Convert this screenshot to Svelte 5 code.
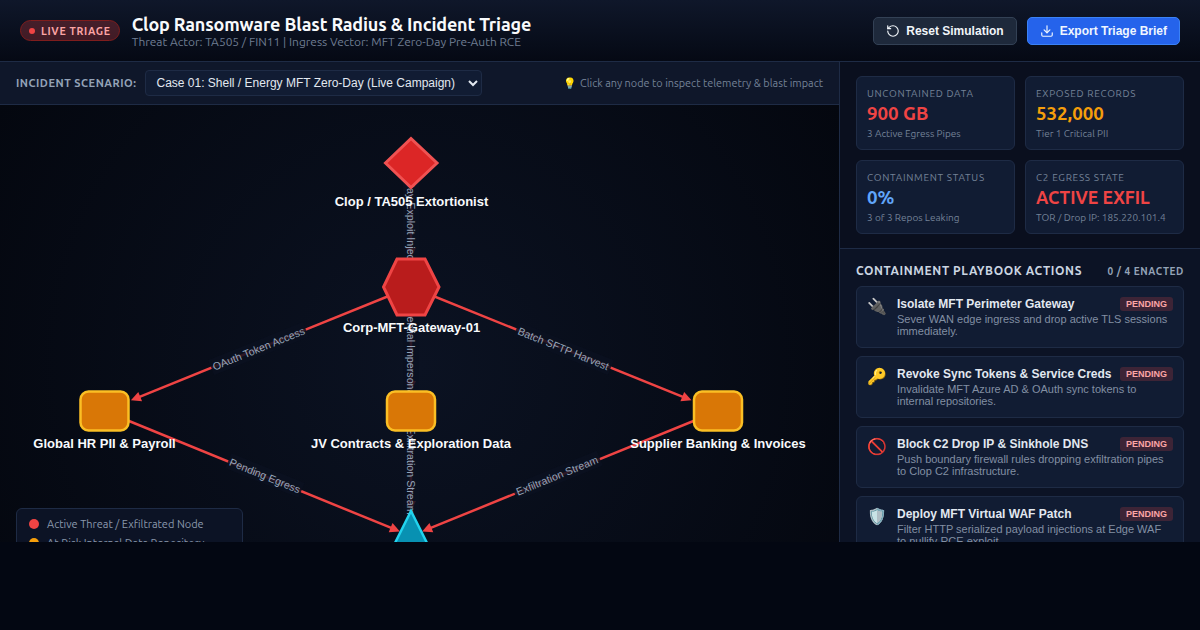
<!--
  Incident triage board: blast radius graph on the left, metrics and playbook on the right.
-->
<script>
  const metrics = [
    { label: 'UNCONTAINED DATA', value: '900 GB', tone: 'red', sub: '3 Active Egress Pipes' },
    { label: 'EXPOSED RECORDS', value: '532,000', tone: 'amber', sub: 'Tier 1 Critical PII' },
    { label: 'CONTAINMENT STATUS', value: '0%', tone: 'blue', sub: '3 of 3 Repos Leaking' },
    { label: 'C2 EGRESS STATE', value: 'ACTIVE EXFIL', tone: 'red small', sub: 'TOR / Drop IP: 185.220.101.4' }
  ];

  const actions = [
    { icon: '🔌', title: 'Isolate MFT Perimeter Gateway', desc: 'Sever WAN edge ingress and drop active TLS sessions immediately.' },
    { icon: '🔑', title: 'Revoke Sync Tokens & Service Creds', desc: 'Invalidate MFT Azure AD & OAuth sync tokens to internal repositories.' },
    { icon: '🚫', title: 'Block C2 Drop IP & Sinkhole DNS', desc: 'Push boundary firewall rules dropping exfiltration pipes to Clop C2 infrastructure.' },
    { icon: '🛡️', title: 'Deploy MFT Virtual WAF Patch', desc: 'Filter HTTP serialized payload injections at Edge WAF to nullify RCE exploit.' }
  ];

  const actor = { x: 411, y: 163 };
  const gateway = { x: 411, y: 287 };
  const hr = { x: 104.5, y: 411 };
  const jv = { x: 411, y: 411 };
  const supplier = { x: 718, y: 411 };
  const drop = { x: 411, y: 536 };

  // gap: how far the arrow tip stops short of the target centre
  // mid: label sits halfway along the visible part of the edge, not centre to centre
  // w: width of the plate behind the label
  const edges = [
    { from: actor, to: gateway, label: '0-Day Exploit Injection', gap: 29, mid: { x: 411, y: 224 }, w: 110 },
    { from: gateway, to: hr, label: 'OAuth Token Access', gap: 28.5, mid: { x: 258.5, y: 348.5 }, w: 102 },
    { from: gateway, to: jv, label: 'Credential Impersonation', gap: 20, mid: { x: 411, y: 353 }, w: 118 },
    { from: gateway, to: supplier, label: 'Batch SFTP Harvest', gap: 28.5, mid: { x: 563.5, y: 348.5 }, w: 102 },
    { from: hr, to: drop, label: 'Pending Egress', gap: 12, mid: { x: 265, y: 475.5 }, w: 79 },
    { from: jv, to: drop, label: 'Exfiltration Stream', gap: 25, mid: { x: 411, y: 471 }, w: 92 },
    { from: supplier, to: drop, label: 'Exfiltration Stream', gap: 12, mid: { x: 557, y: 475.5 }, w: 92 }
  ].map((e) => {
    const dx = e.to.x - e.from.x;
    const dy = e.to.y - e.from.y;
    const len = Math.hypot(dx, dy);
    const ux = dx / len;
    const uy = dy / len;
    const tip = { x: e.to.x - ux * e.gap, y: e.to.y - uy * e.gap };
    let angle = (Math.atan2(dy, dx) * 180) / Math.PI;
    if (angle > 90) angle -= 180;
    if (angle < -90) angle += 180;
    return {
      ...e,
      tip,
      neck: { x: tip.x - ux * 8, y: tip.y - uy * 8 },
      arrow: [
        `${tip.x},${tip.y}`,
        `${tip.x - ux * 10 - uy * 5},${tip.y - uy * 10 + ux * 5}`,
        `${tip.x - ux * 10 + uy * 5},${tip.y - uy * 10 - ux * 5}`
      ].join(' '),
      angle
    };
  });

  const repos = [
    { node: hr, label: 'Global HR PII & Payroll' },
    { node: jv, label: 'JV Contracts & Exploration Data' },
    { node: supplier, label: 'Supplier Banking & Invoices' }
  ];
</script>

<div class="app">
  <header class="topbar">
    <div class="brand">
      <span class="live"><i></i>LIVE TRIAGE</span>
      <div class="titles">
        <h1>Clop Ransomware Blast Radius &amp; Incident Triage</h1>
        <p>Threat Actor: TA505 / FIN11 | Ingress Vector: MFT Zero-Day Pre-Auth RCE</p>
      </div>
    </div>
    <div class="buttons">
      <button type="button" class="btn">
        <svg width="14" height="14" viewBox="0 0 24 24" fill="none" stroke="currentColor" stroke-width="2" stroke-linecap="round" stroke-linejoin="round">
          <path d="M3 12a9 9 0 1 0 9-9 9.75 9.75 0 0 0-6.74 2.74L3 8" />
          <path d="M3 3v5h5" />
        </svg>
        Reset Simulation
      </button>
      <button type="button" class="btn primary">
        <svg width="14" height="14" viewBox="0 0 24 24" fill="none" stroke="currentColor" stroke-width="2" stroke-linecap="round" stroke-linejoin="round">
          <path d="M21 15v4a2 2 0 0 1-2 2H5a2 2 0 0 1-2-2v-4" />
          <path d="M7 10l5 5 5-5" />
          <path d="M12 15V3" />
        </svg>
        Export Triage Brief
      </button>
    </div>
  </header>

  <main class="layout">
    <section class="board">
      <div class="toolbar">
        <div class="scenario">
          <span class="scenario-label">INCIDENT SCENARIO:</span>
          <select>
            <option>Case 01: Shell / Energy MFT Zero-Day (Live Campaign)</option>
          </select>
        </div>
        <span class="hint">💡 Click any node to inspect telemetry &amp; blast impact</span>
      </div>

      <div class="canvas">
        <svg class="graph" width="839" height="480" viewBox="0 105 839 480">
          {#each edges as e}
            <line x1={e.from.x} y1={e.from.y} x2={e.neck.x} y2={e.neck.y} class="edge" />
            <polygon points={e.arrow} class="edge-head" />
          {/each}
          {#each edges as e}
            <g transform="translate({e.mid.x} {e.mid.y}) rotate({e.angle})">
              <rect x={-e.w / 2} y="-8" width={e.w} height="16" class="edge-plate" />
              <text class="edge-label" y="4" text-anchor="middle">{e.label}</text>
            </g>
          {/each}

          <polygon points="411,138.500 437,163 411,187.500 385.500,163" class="n-actor" />
          <polygon points="397,259 425,259 439,287 425,315 397,315 383.500,287" class="n-gateway" />
          {#each repos as r}
            <rect x={r.node.x - 24} y={r.node.y - 19.500} width="48" height="39" rx="8" class="n-repo" />
          {/each}
          <polygon points="411,511 437,563 385,563" class="n-drop" />

          <text class="node-label" x="411.500" y="206" text-anchor="middle">Clop / TA505 Extortionist</text>
          <text class="node-label" x="411.500" y="332" text-anchor="middle">Corp-MFT-Gateway-01</text>
          {#each repos as r}
            <text class="node-label" x={r.node.x} y="448" text-anchor="middle">{r.label}</text>
          {/each}
        </svg>

        <div class="legend">
          <div class="legend-row"><i class="dot red"></i>Active Threat / Exfiltrated Node</div>
          <div class="legend-row"><i class="dot amber"></i>At-Risk Internal Data Repository</div>
        </div>
      </div>
    </section>

    <aside class="side">
      <div class="metrics">
        {#each metrics as m}
          <div class="metric">
            <div class="metric-label">{m.label}</div>
            <div class="metric-value {m.tone}">{m.value}</div>
            <div class="metric-sub">{m.sub}</div>
          </div>
        {/each}
      </div>

      <div class="playbook">
        <div class="playbook-head">
          <h2>CONTAINMENT PLAYBOOK ACTIONS</h2>
          <span>0 / 4 ENACTED</span>
        </div>
        <div class="actions">
          {#each actions as a}
            <div class="action">
              <span class="action-icon">{a.icon}</span>
              <div class="action-body">
                <div class="action-top">
                  <strong>{a.title}</strong>
                  <span class="pending">PENDING</span>
                </div>
                <p>{a.desc}</p>
              </div>
            </div>
          {/each}
        </div>
      </div>
    </aside>
  </main>
</div>

<style>
  :global(body) {
    margin: 0;
    background: #030712;
  }

  .app {
    width: 1200px;
    height: 542px;
    overflow: hidden;
    display: flex;
    flex-direction: column;
    color: #e2e8f0;
    font-family: Ubuntu, system-ui, sans-serif;
    background: #0a0f1e;
  }

  .topbar {
    height: 62px;
    box-sizing: border-box;
    flex-shrink: 0;
    display: flex;
    align-items: center;
    justify-content: space-between;
    padding: 0 20px;
    background: linear-gradient(180deg, #0f172a 0%, #050914 100%);
    border-bottom: 1px solid #1e2b45;
  }

  .brand {
    display: flex;
    align-items: center;
    gap: 12px;
  }

  .live {
    display: inline-flex;
    align-items: center;
    gap: 6px;
    height: 21px;
    box-sizing: border-box;
    padding: 0 8px;
    border-radius: 11px;
    border: 1px solid #7f1d1d;
    background: rgba(239, 68, 68, 0.25);
    color: #fca5a5;
    font-size: 10.5px;
    font-weight: 700;
    letter-spacing: 0.7px;
  }

  .live i {
    width: 6px;
    height: 6px;
    border-radius: 50%;
    background: #ef4444;
  }

  .titles h1 {
    margin: 0;
    font-size: 18px;
    line-height: 22px;
    font-weight: 700;
    letter-spacing: -0.15px;
    color: #f8fafc;
  }

  .titles p {
    margin: 0;
    font-size: 11.96px;
    line-height: 14px;
    color: #6f7d92;
  }

  .buttons {
    display: flex;
    gap: 10px;
  }

  .btn {
    display: flex;
    align-items: center;
    gap: 6px;
    height: 28px;
    box-sizing: border-box;
    padding: 0 12px;
    border-radius: 5px;
    border: 1px solid #334155;
    background: #1e293b;
    color: #f1f5f9;
    font-family: 'Liberation Sans', Arial, sans-serif;
    font-size: 12px;
    font-weight: 700;
  }

  .btn.primary {
    background: #2563eb;
    border-color: #3b82f6;
    color: #eff6ff;
  }

  .layout {
    flex: 1;
    min-height: 0;
    display: flex;
  }

  .board {
    width: 840px;
    box-sizing: border-box;
    flex-shrink: 0;
    border-right: 1px solid #1e2b45;
    display: flex;
    flex-direction: column;
  }

  .toolbar {
    height: 43px;
    box-sizing: border-box;
    flex-shrink: 0;
    display: flex;
    align-items: center;
    justify-content: space-between;
    padding: 0 16px;
    background: #0f172a;
    border-bottom: 1px solid #1e2b45;
  }

  .scenario {
    display: flex;
    align-items: center;
    gap: 9px;
  }

  .scenario-label {
    font-size: 11px;
    font-weight: 700;
    letter-spacing: 0.5px;
    color: #94a3b8;
  }

  select {
    width: 337px;
    height: 26px;
    padding: 0 6px;
    border-radius: 4px;
    border: 1px solid #1e2b45;
    background: #111c33;
    color: #e2e8f0;
    font-family: 'Liberation Sans', Arial, sans-serif;
    font-size: 12px;
  }

  .hint {
    font-size: 10.88px;
    color: #748297;
  }

  .canvas {
    position: relative;
    flex: 1;
    min-height: 0;
    overflow: hidden;
    background: radial-gradient(circle at 50% 60%, #0b1222 0%, #04070f 100%);
  }

  .graph {
    display: block;
  }

  .edge {
    stroke: #ef4444;
    stroke-width: 2.5;
  }

  .edge-head {
    fill: #ef4444;
  }

  .edge-plate {
    fill: #0b1120;
    fill-opacity: 0.85;
  }

  .edge-label {
    font-family: 'Liberation Sans', Arial, sans-serif;
    font-size: 10.7px;
    fill: #94a3b8;
  }

  .node-label {
    font-family: 'Liberation Sans', Arial, sans-serif;
    font-size: 13px;
    font-weight: 700;
    fill: #f8fafc;
  }

  .n-actor {
    fill: #dc2626;
    stroke: #f05252;
    stroke-width: 3;
  }

  .n-gateway {
    fill: #b91c1c;
    stroke: #ef4444;
    stroke-width: 3;
  }

  .n-repo {
    fill: #d97706;
    stroke: #fbbf24;
    stroke-width: 2.5;
  }

  .n-drop {
    fill: #0891b2;
    stroke: #22d3ee;
    stroke-width: 2.5;
  }

  .legend {
    position: absolute;
    left: 16px;
    top: 403px;
    width: 227px;
    box-sizing: border-box;
    padding: 8px 12px;
    display: grid;
    gap: 5px;
    border-radius: 6px;
    border: 1px solid #1e2b45;
    background: #0c1325;
  }

  .legend-row {
    display: flex;
    align-items: center;
    gap: 8px;
    font-size: 11px;
    line-height: 14px;
    color: #8a98ac;
  }

  .dot {
    width: 10px;
    height: 10px;
    border-radius: 50%;
  }

  .dot.red {
    background: #ef4444;
  }

  .dot.amber {
    background: #f59e0b;
  }

  .side {
    flex: 1;
    min-width: 0;
    display: flex;
    flex-direction: column;
  }

  .metrics {
    flex-shrink: 0;
    display: grid;
    grid-template-columns: 1fr 1fr;
    gap: 10px;
    padding: 14px 16px;
    border-bottom: 1px solid #1e2b45;
    background: #0a0f1e;
  }

  .metric {
    height: 74px;
    box-sizing: border-box;
    padding: 10px;
    border-radius: 6px;
    border: 1px solid #1e2b45;
    background: #111c33;
  }

  .metric-label {
    font-size: 10px;
    line-height: 14px;
    letter-spacing: 0.7px;
    color: #748297;
    margin-bottom: 1px;
  }

  .metric-value {
    font-size: 18.7px;
    line-height: 24px;
    font-weight: 700;
    margin-bottom: 1px;
  }

  .metric-value.small {
    font-size: 17.6px;
  }

  .metric-value.red {
    color: #ef4444;
  }

  .metric-value.amber {
    color: #f59e0b;
  }

  .metric-value.blue {
    color: #60a5fa;
  }

  .metric-sub {
    font-size: 10px;
    line-height: 14px;
    color: #748297;
  }

  .playbook {
    flex: 1;
    min-height: 0;
    overflow: hidden;
    padding: 14px 16px;
    background: #0c1325;
  }

  .playbook-head {
    display: flex;
    align-items: center;
    justify-content: space-between;
    margin-bottom: 7px;
  }

  .playbook-head h2 {
    margin: 0;
    font-size: 12px;
    line-height: 16px;
    font-weight: 700;
    letter-spacing: 0.6px;
    color: #cbd5e1;
  }

  .playbook-head span {
    font-size: 10px;
    font-weight: 700;
    letter-spacing: 0.6px;
    color: #94a3b8;
  }

  .actions {
    display: grid;
    gap: 8px;
  }

  .action {
    display: flex;
    gap: 10px;
    height: 62px;
    box-sizing: border-box;
    padding: 10px;
    border-radius: 6px;
    border: 1px solid #1e2b45;
    background: #111c33;
    font-family: 'Liberation Sans', Arial, sans-serif;
  }

  .action-icon {
    width: 20px;
    flex-shrink: 0;
    font-size: 16px;
    line-height: 20px;
    text-align: center;
  }

  .action-body {
    flex: 1;
    min-width: 0;
  }

  .action-top {
    display: flex;
    align-items: center;
    justify-content: space-between;
  }

  .action-top strong {
    font-size: 12px;
    line-height: 14px;
    color: #e2e8f0;
  }

  .pending {
    padding: 0 6px;
    height: 14px;
    line-height: 14px;
    border-radius: 3px;
    background: rgba(239, 68, 68, 0.2);
    color: #fca5a5;
    font-size: 9px;
    font-weight: 700;
  }

  .action-body p {
    margin: 2px 0 0;
    font-size: 11px;
    line-height: 12px;
    color: #828fa3;
  }
</style>
